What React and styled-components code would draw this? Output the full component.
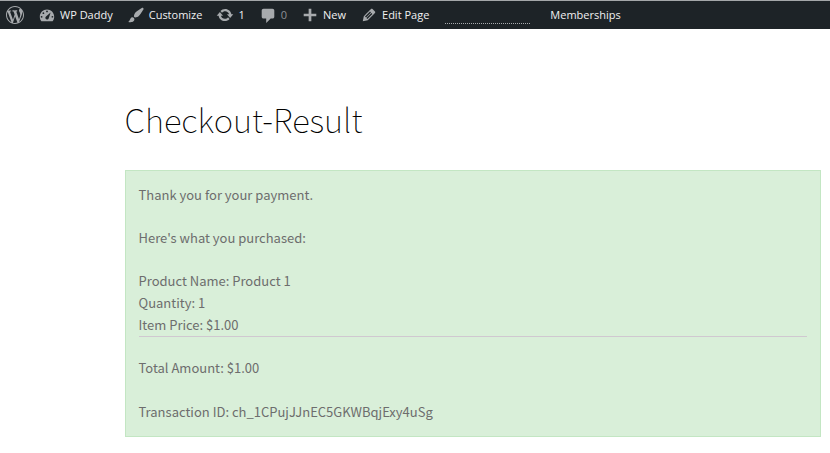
import React from "react";
import styled, { createGlobalStyle } from "styled-components";

const icons = {
    wordpress: "M20 10c0-5.51-4.49-10-10-10C4.48 0 0 4.49 0 10c0 5.52 4.48 10 10 10 5.51 0 10-4.48 10-10zM7.78 15.37L4.37 6.22c.55-.02 1.17-.08 1.17-.08.5-.06.44-1.13-.06-1.11 0 0-1.45.11-2.37.11-.18 0-.37 0-.58-.01C4.12 2.69 6.87 1.11 10 1.11c2.33 0 4.45.87 6.05 2.34-.68-.11-1.65.39-1.65 1.58 0 .74.45 1.36.9 2.1.35.61.55 1.36.55 2.46 0 1.49-1.4 5-1.4 5l-3.03-8.37c.54-.02.82-.17.82-.17.5-.05.44-1.25-.06-1.22 0 0-1.44.12-2.38.12-.87 0-2.33-.12-2.33-.12-.5-.03-.56 1.2-.06 1.22l.92.08 1.26 3.41zM17.41 10c.24-.64.74-1.87.43-4.25.7 1.29 1.05 2.71 1.05 4.25 0 3.29-1.73 6.24-4.4 7.78.97-2.59 1.94-5.2 2.92-7.78zM6.1 18.09C3.12 16.65 1.11 13.53 1.11 10c0-1.3.23-2.48.72-3.59C3.25 10.3 4.67 14.2 6.1 18.09zM10.1 11.46l2.58 6.98c-.86.29-1.76.45-2.68.45-.79 0-1.57-.11-2.29-.33.81-2.38 1.62-4.74 2.39-7.1z",
    dashboard: "M3.76 17h12.48c1.1-1.37 1.76-3.11 1.76-5 0-4.42-3.58-8-8-8s-8 3.58-8 8c0 1.89.66 3.63 1.76 5zM10 5c.55 0 1 .45 1 1s-.45 1-1 1-1-.45-1-1 .45-1 1-1zM6 7c.55 0 1 .45 1 1s-.45 1-1 1-1-.45-1-1 .45-1 1-1zM14 7.2l-2.2 6.6c-.3.9-1 1.4-1.9 1.3-1.1-.1-1.9-1.1-1.7-2.2.1-.5.3-.9.7-1.2zM4 11c.55 0 1 .45 1 1s-.45 1-1 1-1-.45-1-1 .45-1 1-1zM16 11c.55 0 1 .45 1 1s-.45 1-1 1-1-.45-1-1 .45-1 1-1z",
    customize: "M18.33 3.57s.27-.8-.31-1.36c-.53-.52-1.22-.24-1.22-.24-.61.3-5.76 3.47-7.67 5.57-.86.96-2.06 3.79-1.09 4.82.92.98 3.96-.17 4.79-1 2.06-2.06 5.21-7.17 5.5-7.79zM1.4 17.65c2.37-1.56 1.46-3.41 3.23-4.64.93-.65 2.22-.62 3.08.29.63.67.8 2.57-.16 3.46-1.57 1.45-4 1.55-6.15.89z",
    update: "M10.2 3.28c3.53 0 6.43 2.61 6.92 6h2.08l-3.5 4-3.5-4h2.32c-.45-1.97-2.21-3.45-4.32-3.45-1.45 0-2.73.71-3.54 1.78L4.95 5.66C6.23 4.2 8.11 3.28 10.2 3.28zM9.8 16.72c-3.52 0-6.43-2.61-6.92-6H.8l3.5-4 3.5 4H5.48c.45 1.97 2.21 3.45 4.32 3.45 1.45 0 2.73-.71 3.54-1.78l1.71 1.95c-1.28 1.46-3.15 2.38-5.25 2.38z",
    comment: "M5 3h10c1.1 0 2 .9 2 2v7c0 1.1-.9 2-2 2h-2l-5 5v-5H5c-1.1 0-2-.9-2-2V5c0-1.1.9-2 2-2z",
    plus: "M17 8.5v3h-5.5V17h-3v-5.5H3v-3h5.500V3h3v5.500z",
    edit: "M13.89 3.39l2.71 2.72c.46.46.42 1.24.03 1.64l-8.01 8.02-5.56 1.16 1.16-5.58s7.6-7.63 7.99-8.03c.39-.39 1.22-.39 1.68.07zM11.16 6.18l-5.59 5.61 1.11 1.11 5.54-5.65zM8.19 14.41l5.58-5.6-1.07-1.08-5.59 5.6z",
}

function Icon({ name }) {
    return (
        <IconStyled viewBox="0 0 20 20" aria-hidden="true">
            <path fillRule="evenodd" d={icons[name]} />
        </IconStyled>
    )
}

function AdminBar() {
    return (
        <AdminBarStyled>
            <BarLink href="#about" aria-label="About WordPress"><Icon name="wordpress" /></BarLink>
            <BarLink href="#site"><Icon name="dashboard" />WP Daddy</BarLink>
            <BarLink href="#customize"><Icon name="customize" />Customize</BarLink>
            <BarLink href="#updates"><Icon name="update" />1</BarLink>
            <BarLink href="#comments" $muted><Icon name="comment" />0</BarLink>
            <BarLink href="#new"><Icon name="plus" />New</BarLink>
            <BarLink href="#edit"><Icon name="edit" />Edit Page</BarLink>
            <Sparkline />
            <BarLink href="#memberships">Memberships</BarLink>
        </AdminBarStyled>
    )
}

function App() {
    return (
        <>
            <GlobalStyle />
            <AdminBar />
            <Page>
                <Title>Checkout-Result</Title>
                <Notice>
                    <p>Thank you for your payment.</p>
                    <p>Here's what you purchased:</p>
                    <p>
                        Product Name: Product 1<br />
                        Quantity: 1<br />
                        Item Price: $1.00
                    </p>
                    <hr />
                    <p>Total Amount: $1.00</p>
                    <p>Transaction ID: ch_1CPujJJnEC5GKWBqjExy4uSg</p>
                </Notice>
            </Page>
        </>
    )
}

const GlobalStyle = createGlobalStyle`
*{
    box-sizing: border-box;
}

body{
    margin: 0;
    background: #fff;
    color: #6d6d6d;
    font-family: "Source Sans Pro", "Noto Sans CJK SC", sans-serif;
}
`;

const AdminBarStyled = styled.nav`
display: flex;
align-items: center;
gap: 14px;
height: 29px;
padding: 0 6px;
border-top: 1px solid #a4a7a9;
background: #1d2327;
`;

const BarLink = styled.a`
display: flex;
align-items: center;
gap: 4px;
color: ${({ $muted }) => $muted ? "#8c8f94" : "#f0f0f1"};
font: 500 11px/28px "Segoe UI", "Open Sans", sans-serif;
white-space: nowrap;
text-decoration: none;
`;

const IconStyled = styled.svg`
flex: none;
width: 18px;
height: 18px;
fill: #a7aaad;
`;

const Sparkline = styled.span`
width: 85px;
height: 18px;
margin: 0 6px 0 2px;
border-bottom: 1px dotted #a7aaad;
`;

const Page = styled.main`
padding: 63px 9px 16px 15%;
`;

const Title = styled.h1`
margin: 0 0 23px;
color: #000;
font-size: 33px;
font-weight: 100;
line-height: 55px;
`;

const Notice = styled.section`
padding: 13px;
border: 1px solid #c3e6c3;
background: #d9efd9;
font-size: 13px;
line-height: 22px;

p{
    margin: 0 0 21px;
}
p:last-child{
    margin-bottom: 0;
}
p:has(+ hr){
    margin-bottom: 0;
}
hr{
    margin: 0 0 20px;
    border: 0;
    border-top: 1px solid #d0c8d0;
}
hr + p{
    margin-bottom: 22px;
}
`;

export default App;
